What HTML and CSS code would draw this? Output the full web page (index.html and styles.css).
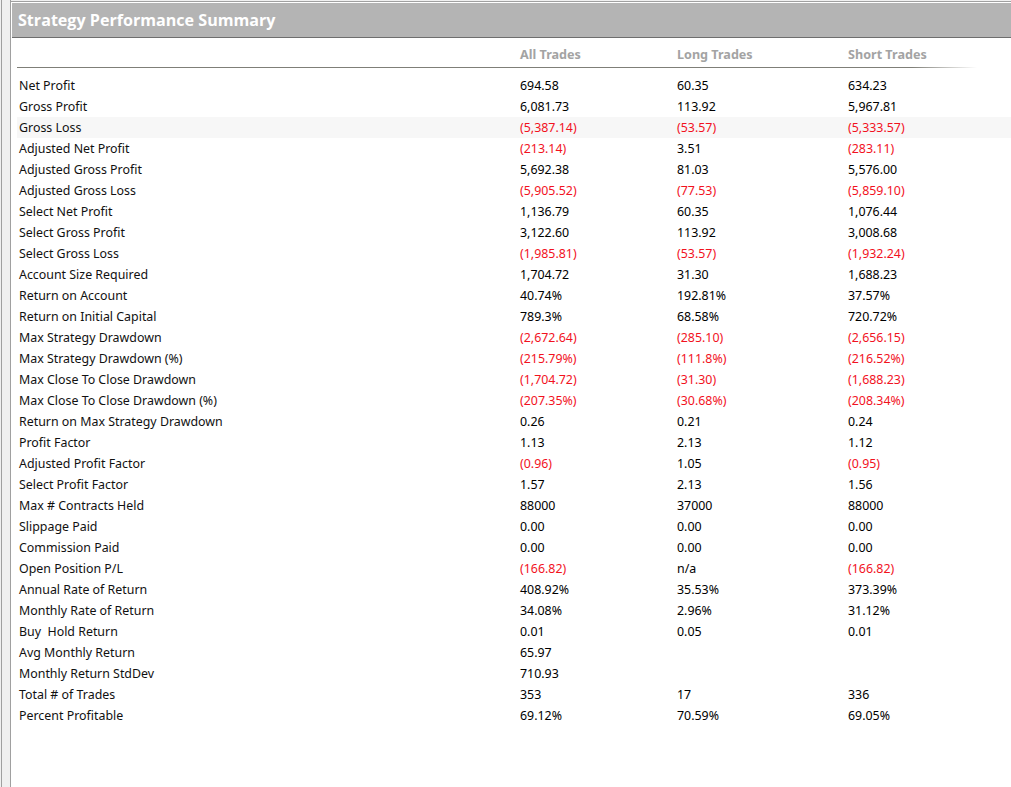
FILE: index.html
```html
<!DOCTYPE html>
<html lang="en">
<head>
<meta charset="utf-8">
<title>Strategy Performance Summary</title>
<link rel="stylesheet" href="styles.css">
</head>
<body>
<div class="frame">
  <div class="rail"></div>
  <div class="main">
    <div class="title-bar">Strategy Performance Summary</div>
    <div class="report">
      <div class="row head">
        <div class="label"></div>
        <div>All Trades</div>
        <div>Long Trades</div>
        <div>Short Trades</div>
      </div>
      <div class="rule"></div>
      <div class="rows">
        <div class="row"><div class="label">Net Profit</div><div>694.58</div><div>60.35</div><div>634.23</div></div>
        <div class="row"><div class="label">Gross Profit</div><div>6,081.73</div><div>113.92</div><div>5,967.81</div></div>
        <div class="row hl"><div class="label">Gross Loss</div><div class="neg">(5,387.14)</div><div class="neg">(53.57)</div><div class="neg">(5,333.57)</div></div>
        <div class="row"><div class="label">Adjusted Net Profit</div><div class="neg">(213.14)</div><div>3.51</div><div class="neg">(283.11)</div></div>
        <div class="row"><div class="label">Adjusted Gross Profit</div><div>5,692.38</div><div>81.03</div><div>5,576.00</div></div>
        <div class="row"><div class="label">Adjusted Gross Loss</div><div class="neg">(5,905.52)</div><div class="neg">(77.53)</div><div class="neg">(5,859.10)</div></div>
        <div class="row"><div class="label">Select Net Profit</div><div>1,136.79</div><div>60.35</div><div>1,076.44</div></div>
        <div class="row"><div class="label">Select Gross Profit</div><div>3,122.60</div><div>113.92</div><div>3,008.68</div></div>
        <div class="row"><div class="label">Select Gross Loss</div><div class="neg">(1,985.81)</div><div class="neg">(53.57)</div><div class="neg">(1,932.24)</div></div>
        <div class="row"><div class="label">Account Size Required</div><div>1,704.72</div><div>31.30</div><div>1,688.23</div></div>
        <div class="row"><div class="label">Return on Account</div><div>40.74%</div><div>192.81%</div><div>37.57%</div></div>
        <div class="row"><div class="label">Return on Initial Capital</div><div>789.3%</div><div>68.58%</div><div>720.72%</div></div>
        <div class="row"><div class="label">Max Strategy Drawdown</div><div class="neg">(2,672.64)</div><div class="neg">(285.10)</div><div class="neg">(2,656.15)</div></div>
        <div class="row"><div class="label">Max Strategy Drawdown (%)</div><div class="neg">(215.79%)</div><div class="neg">(111.8%)</div><div class="neg">(216.52%)</div></div>
        <div class="row"><div class="label">Max Close To Close Drawdown</div><div class="neg">(1,704.72)</div><div class="neg">(31.30)</div><div class="neg">(1,688.23)</div></div>
        <div class="row"><div class="label">Max Close To Close Drawdown (%)</div><div class="neg">(207.35%)</div><div class="neg">(30.68%)</div><div class="neg">(208.34%)</div></div>
        <div class="row"><div class="label">Return on Max Strategy Drawdown</div><div>0.26</div><div>0.21</div><div>0.24</div></div>
        <div class="row"><div class="label">Profit Factor</div><div>1.13</div><div>2.13</div><div>1.12</div></div>
        <div class="row"><div class="label">Adjusted Profit Factor</div><div class="neg">(0.96)</div><div>1.05</div><div class="neg">(0.95)</div></div>
        <div class="row"><div class="label">Select Profit Factor</div><div>1.57</div><div>2.13</div><div>1.56</div></div>
        <div class="row"><div class="label">Max # Contracts Held</div><div>88000</div><div>37000</div><div>88000</div></div>
        <div class="row"><div class="label">Slippage Paid</div><div>0.00</div><div>0.00</div><div>0.00</div></div>
        <div class="row"><div class="label">Commission Paid</div><div>0.00</div><div>0.00</div><div>0.00</div></div>
        <div class="row"><div class="label">Open Position P/L</div><div class="neg">(166.82)</div><div>n/a</div><div class="neg">(166.82)</div></div>
        <div class="row"><div class="label">Annual Rate of Return</div><div>408.92%</div><div>35.53%</div><div>373.39%</div></div>
        <div class="row"><div class="label">Monthly Rate of Return</div><div>34.08%</div><div>2.96%</div><div>31.12%</div></div>
        <div class="row"><div class="label">Buy &nbsp;Hold Return</div><div>0.01</div><div>0.05</div><div>0.01</div></div>
        <div class="row"><div class="label">Avg Monthly Return</div><div>65.97</div><div></div><div></div></div>
        <div class="row"><div class="label">Monthly Return StdDev</div><div>710.93</div><div></div><div></div></div>
        <div class="row"><div class="label">Total # of Trades</div><div>353</div><div>17</div><div>336</div></div>
        <div class="row"><div class="label">Percent Profitable</div><div>69.12%</div><div>70.59%</div><div>69.05%</div></div>
      </div>
    </div>
  </div>
</div>
</body>
</html>
```

FILE: styles.css
```css
* { box-sizing: border-box; }
html, body {
  margin: 0;
  padding: 0;
  background: #f0f0f0;
}
body {
  font-family: "Noto Sans", "Open Sans", sans-serif;
  font-size: 12.4px;
  color: #000;
}
.frame {
  display: flex;
  width: 1011px;
  height: 787px;
  overflow: hidden;
}
.rail {
  width: 10px;
  margin-left: 1px;
  border-left: 1px solid #a0a0a0;
  border-right: 1px solid #a0a0a0;
  background: #f0f0f0;
  flex: none;
}
.main {
  flex: 1;
  margin-top: 1px;
  border-top: 1px solid #a0a0a0;
  padding: 1px 0 0 1px;
  background: #fff;
}
.title-bar {
  height: 35px;
  background: #b4b4b4;
  border-bottom: 1px solid #6e6e6e;
  color: #fff;
  font-family: "Open Sans", "Noto Sans", sans-serif;
  font-weight: 700;
  font-size: 16.1px;
  line-height: 34px;
  padding-left: 6px;
}
.report {
  padding-left: 5px;
}
.row {
  display: grid;
  grid-template-columns: 503px 157px 171px 1fr;
  height: 21px;
  line-height: 21px;
  white-space: nowrap;
}
.row .label {
  padding-left: 2px;
  color: #111;
}
.row.head {
  margin-top: 6px;
  margin-bottom: 2px;
  color: #a3a3a3;
  font-weight: 700;
  font-size: 12.6px;
}
.rule {
  height: 1px;
  width: 960px;
  background: linear-gradient(to right, #7f7f78 0, #7f7f78 895px, #ffffff 100%);
}
.rows {
  margin-top: 7px;
}
.row.hl {
  background: #f7f7f7;
}
.neg {
  color: #f2121e;
}
```
